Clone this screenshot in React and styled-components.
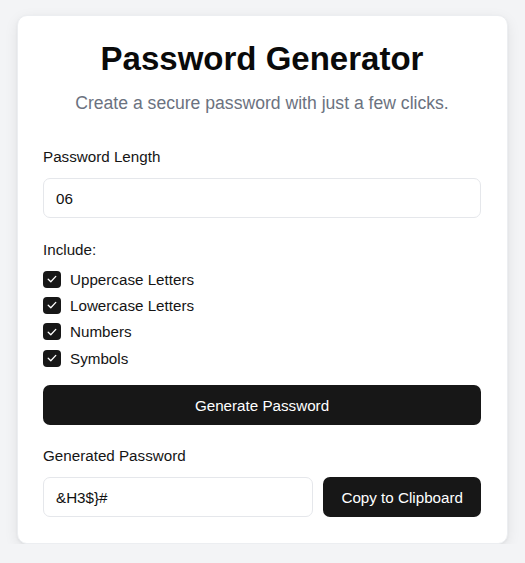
import React from "react";
import styled, { createGlobalStyle } from "styled-components";

const Global = createGlobalStyle`
  html, body { margin: 0; padding: 0; background: #f3f4f6; }
  body { font-family: "Liberation Sans", Arial, sans-serif; color: #111; }
  * { box-sizing: border-box; }
`;

const Page = styled.div`
  padding-top: 15px;
  display: flex;
  justify-content: center;
`;

const Card = styled.div`
  width: 491px;
  background: #fff;
  border: 1px solid #eceef1;
  border-radius: 10px;
  box-shadow: 0 4px 14px rgba(0, 0, 0, 0.08), 0 1px 3px rgba(0, 0, 0, 0.05);
  padding: 24px 26px 26px 25px;
  display: flex;
  flex-direction: column;
`;

const Title = styled.h1`
  margin: 0;
  text-align: center;
  font-size: 33px;
  line-height: 38px;
  font-weight: 700;
  color: #0a0a0a;
`;

const Subtitle = styled.p`
  margin: 12px 0 0;
  text-align: center;
  font-size: 17.6px;
  line-height: 27px;
  color: #6b7280;
`;

const Label = styled.div`
  font-size: 15.2px;
  line-height: 22px;
  color: #151515;
  margin-top: ${(p) => p.$mt}px;
`;

const Field = styled.div`
  height: 40px;
  border: 1px solid #e5e7eb;
  border-radius: 7px;
  padding: 0 12px;
  display: flex;
  align-items: center;
  font-size: 15.2px;
  color: #111;
  margin-top: ${(p) => p.$mt || 0}px;
  flex: ${(p) => (p.$grow ? 1 : "none")};
`;

const Options = styled.div`
  margin-top: 5px;
  display: flex;
  flex-direction: column;
`;

const Option = styled.label`
  height: 26.3px;
  display: flex;
  align-items: center;
  gap: 9px;
  font-size: 15.2px;
  color: #151515;
`;

const Box = styled.span`
  width: 18px;
  height: 17px;
  border-radius: 4px;
  background: #171717;
  display: flex;
  align-items: center;
  justify-content: center;
`;

const Button = styled.button`
  height: 40px;
  border: none;
  border-radius: 7px;
  background: #171717;
  color: #fff;
  font-family: "Liberation Sans", Arial, sans-serif;
  font-size: 15.2px;
  padding: 0 18px;
  margin-top: ${(p) => p.$mt || 0}px;
  cursor: pointer;
`;

const Row = styled.div`
  display: flex;
  gap: 10px;
  margin-top: 10px;
`;

const Check = () => (
  <svg width="12" height="12" viewBox="0 0 12 12" fill="none">
    <path d="M2.2 6.3 L4.8 8.8 L9.8 3.4" stroke="#fff" strokeWidth="1.3" strokeLinecap="round" strokeLinejoin="round" />
  </svg>
);

const options = ["Uppercase Letters", "Lowercase Letters", "Numbers", "Symbols"];

export default function App() {
  return (
    <Page>
      <Global />
      <Card>
        <Title>Password Generator</Title>
        <Subtitle>Create a secure password with just a few clicks.</Subtitle>
        <Label $mt={29}>Password Length</Label>
        <Field $mt={10}>06</Field>
        <Label $mt={21}>Include:</Label>
        <Options>
          {options.map((o) => (
            <Option key={o}>
              <Box>
                <Check />
              </Box>
              {o}
            </Option>
          ))}
        </Options>
        <Button $mt={14}>Generate Password</Button>
        <Label $mt={20}>Generated Password</Label>
        <Row>
          <Field $grow>&amp;H3$}#</Field>
          <Button>Copy to Clipboard</Button>
        </Row>
      </Card>
    </Page>
  );
}
